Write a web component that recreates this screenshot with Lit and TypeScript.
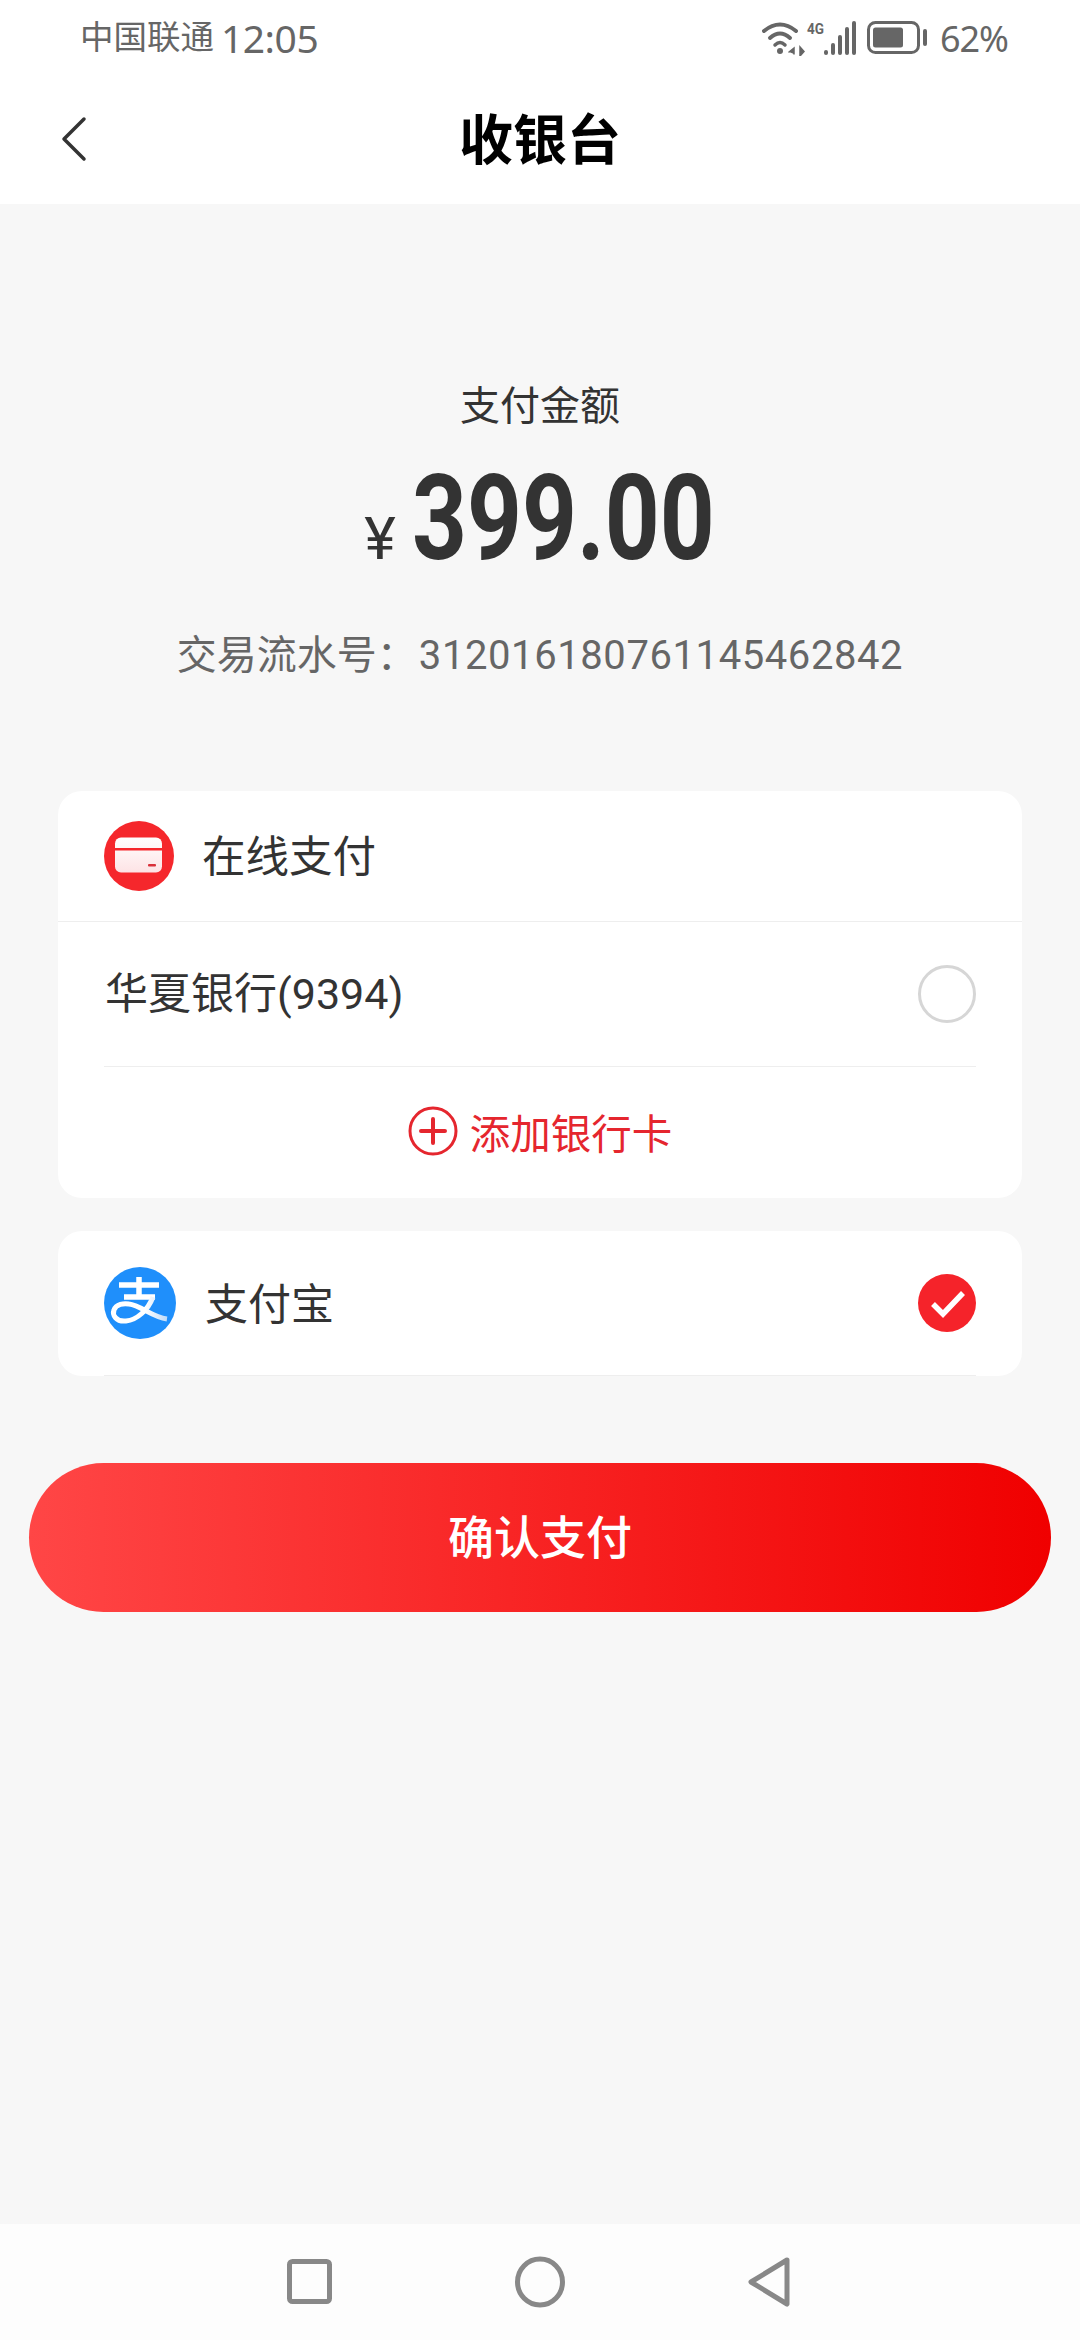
import { LitElement, html, css } from "lit";
import { customElement } from "lit/decorators.js";

@customElement("app-root")
export class AppRoot extends LitElement {
  static styles = css`
    :host {
      display: flex;
      flex-direction: column;
      width: 1080px;
      height: 2340px;
      background: #f7f7f7;
      font-family: "Roboto", "Noto Sans CJK SC", sans-serif;
      color: #333;
      overflow: hidden;
    }
    .top { background: #fff; height: 204px; flex: none; }
    .status {
      height: 76px;
      display: flex;
      align-items: center;
      justify-content: space-between;
      padding: 0 72px 0 80px;
      color: #666;
    }
    .status-left { display: flex; align-items: center; gap: 7px; font-size: 33.5px; line-height: 40px; }
    .time { font-size: 39px; font-family: "Noto Sans", sans-serif; letter-spacing: -0.5px; }
    .status-right { display: flex; align-items: center; }
    .status-right svg { display: block; }
    .pct { font-size: 36px; margin-left: 11px; font-family: "Noto Sans", sans-serif; letter-spacing: -1px; }
    .title-bar {
      height: 128px;
      display: flex;
      align-items: center;
      justify-content: center;
      position: relative;
    }
    .back { position: absolute; left: 60px; top: 40px; }
    .title { font-size: 54px; font-weight: 700; color: #000; line-height: 72px; margin-top: 3px; }

    .hero { display: flex; flex-direction: column; align-items: center; padding-top: 175px; flex: none; }
    .label { font-size: 40px; line-height: 56px; color: #333; }
    .amount { display: flex; align-items: baseline; margin-top: 19px; height: 130px; line-height: 130px; color: #333; }
    .cur { font-size: 60px; margin-right: 16px; font-family: "Roboto", sans-serif; }
    .num {
      display: inline-block;
      font-size: 118px;
      font-weight: 700;
      font-family: "Roboto", sans-serif;
      transform: scaleX(0.8125);
      margin: 0 -34.5px;
    }
    .serial { font-size: 40px; line-height: 56px; color: #666; margin-top: 44px; }
    .serial .digits { letter-spacing: 0.58px; margin-left: 2px; }

    .card { background: #fff; border-radius: 24px; margin: 0 58px; flex: none; }
    .card.online { margin-top: 107px; height: 407px; }
    .card.alipay { margin-top: 33px; padding: 0 46px; }
    .pay-row {
      height: 145px;
      box-sizing: border-box;
      display: flex;
      align-items: center;
      border-bottom: 1px solid #eee;
    }
    .card-head {
      height: 131px;
      box-sizing: border-box;
      display: flex;
      align-items: center;
      padding-left: 46px;
      border-bottom: 1px solid #eee;
    }
    .card-head .txt { margin-left: 28px; font-size: 43.5px; line-height: 60px; padding-top: 4px; }
    .bank {
      margin: 0 46px;
      height: 145px;
      box-sizing: border-box;
      display: flex;
      align-items: center;
      justify-content: space-between;
      border-bottom: 1px solid #eee;
    }
    .bank .txt { font-size: 43px; line-height: 60px; margin-left: 1px; }
    .radio {
      width: 58px;
      height: 58px;
      box-sizing: border-box;
      border: 3px solid #d6d6d6;
      border-radius: 50%;
      flex: none;
    }
    .add {
      height: 130px;
      display: flex;
      align-items: center;
      justify-content: center;
      gap: 12px;
      color: #e5262e;
      font-size: 40.5px;
      padding-bottom: 2px;
      box-sizing: border-box;
    }
    .pay-row .txt { margin-left: 29px; font-size: 43px; line-height: 60px; flex: 1; padding-top: 4px; }
    .pay-row svg { flex: none; display: block; }

    .pay {
      margin: 87px 29px 0;
      height: 149px;
      border-radius: 75px;
      background: linear-gradient(90deg, #ff4646, #f00000);
      color: #fff;
      font-size: 46px;
      font-weight: 500;
      display: flex;
      align-items: center;
      justify-content: center;
      flex: none;
      padding-bottom: 7px;
      box-sizing: border-box;
    }
    .spacer { flex: 1; }
    .navbar {
      height: 116px;
      background: #fdfdfd;
      flex: none;
    }
    .navbar svg { display: block; }
  `;

  render() {
    return html`
      <div class="top">
        <div class="status">
          <div class="status-left"><span>中国联通</span><span class="time">12:05</span></div>
          <div class="status-right">
            <svg width="94" height="36" viewBox="0 0 94 36" fill="none" stroke="#666" stroke-linecap="round">
              <path d="M2 11 Q18 -2 34 11" stroke-width="4"/>
              <path d="M8 18 Q18 9 28 18" stroke-width="4"/>
              <path d="M13 25 Q18 20 23 25" stroke-width="3.500"/>
              <circle cx="18" cy="31" r="3" fill="#666" stroke="none"/>
              <path d="M27 32 l5 -4 v6 M38 27 l0 9 l4 -4.500 z" stroke-width="1.500" fill="#666"/>
              <text x="45" y="14" font-size="14" font-weight="700" fill="#666" stroke="none" font-family="Roboto, sans-serif" textLength="17" lengthAdjust="spacingAndGlyphs">4G</text>
              <g stroke-width="4">
                <path d="M64 32 v1"/><path d="M71 25 v8"/><path d="M78 17 v16"/><path d="M85 9 v24"/><path d="M92 3 v30"/>
              </g>
            </svg>
            <svg style="margin-left:11px" width="62" height="34" viewBox="0 0 62 34" fill="none">
              <rect x="1.500" y="1.500" width="50" height="30" rx="7" stroke="#666" stroke-width="3"/>
              <rect x="6" y="6.500" width="30" height="20" rx="2.500" fill="#666"/>
              <rect x="56" y="8" width="4" height="17" rx="2" fill="#666"/>
            </svg>
            <span class="pct">62%</span>
          </div>
        </div>
        <div class="title-bar">
          <svg class="back" width="28" height="46" viewBox="0 0 28 46" fill="none" stroke="#333" stroke-width="3.500" stroke-linecap="round" stroke-linejoin="round">
            <path d="M24 3 L4 23 L24 43"/>
          </svg>
          <div class="title">收银台</div>
        </div>
      </div>

      <div class="hero">
        <div class="label">支付金额</div>
        <div class="amount"><span class="cur">¥</span><span class="num">399.00</span></div>
        <div class="serial">交易流水号：<span class="digits">312016180761145462842</span></div>
      </div>

      <div class="card online">
        <div class="card-head">
          <svg width="70" height="70" viewBox="0 0 70 70">
            <defs>
              <linearGradient id="cardg" x1="0" y1="0" x2="0" y2="1">
                <stop offset="0" stop-color="#fff"/>
                <stop offset="1" stop-color="#fde3e5"/>
              </linearGradient>
            </defs>
            <circle cx="35" cy="35" r="35" fill="#f5272c"/>
            <rect x="11" y="16.500" width="47" height="35" rx="6" fill="url(#cardg)"/>
            <rect x="11" y="27" width="47" height="2.500" fill="#f5272c"/>
            <rect x="44" y="43" width="8" height="2.500" rx="1" fill="#d9303a"/>
          </svg>
          <span class="txt">在线支付</span>
        </div>
        <div class="bank">
          <span class="txt">华夏银行(9394)</span>
          <span class="radio"></span>
        </div>
        <div class="add">
          <svg width="50" height="50" viewBox="0 0 50 50" fill="none" stroke="#e5262e" stroke-linecap="round">
            <circle cx="25" cy="25" r="23" stroke-width="3"/>
            <path d="M13 25 H37 M25 13 V37" stroke-width="4"/>
          </svg>
          <span>添加银行卡</span>
        </div>
      </div>

      <div class="card alipay">
        <div class="pay-row">
          <svg width="72" height="72" viewBox="0 0 72 72" fill="none" stroke-linecap="butt">
            <defs>
              <linearGradient id="apg" gradientUnits="userSpaceOnUse" x1="8" y1="0" x2="64" y2="0">
                <stop offset="0" stop-color="#fff"/>
                <stop offset="0.6" stop-color="#fff"/>
                <stop offset="1" stop-color="#bcd9f8"/>
              </linearGradient>
            </defs>
            <circle cx="36" cy="36" r="36" fill="#1f8ffb"/>
            <path d="M15 18 H55 M35 10 V31 M20 30 H51" stroke="#fff" stroke-width="5.500"/>
            <path d="M49 30 C44 43 33 53 22 54 C12 55 8 48 10 43 C12 37 20 36 25 37 C36 38 48 50 63 52" stroke="url(#apg)" stroke-width="5"/>
          </svg>
          <span class="txt">支付宝</span>
          <svg width="58" height="58" viewBox="0 0 58 58" fill="none">
            <circle cx="29" cy="29" r="29" fill="#f5232a"/>
            <path d="M15 30 L25 40 L45 19" stroke="#fff" stroke-width="5.500"/>
          </svg>
        </div>
      </div>

      <div class="pay">确认支付</div>
      <div class="spacer"></div>
      <div class="navbar">
        <svg width="1080" height="116" viewBox="0 0 1080 116" fill="none" stroke="#888" stroke-width="5" stroke-linejoin="round">
          <rect x="289.500" y="37.500" width="40" height="40" rx="3"/>
          <ellipse cx="540" cy="58" rx="22.500" ry="23"/>
          <path d="M787 36 L751 58 L787 80 Z"/>
        </svg>
      </div>
    `;
  }
}
